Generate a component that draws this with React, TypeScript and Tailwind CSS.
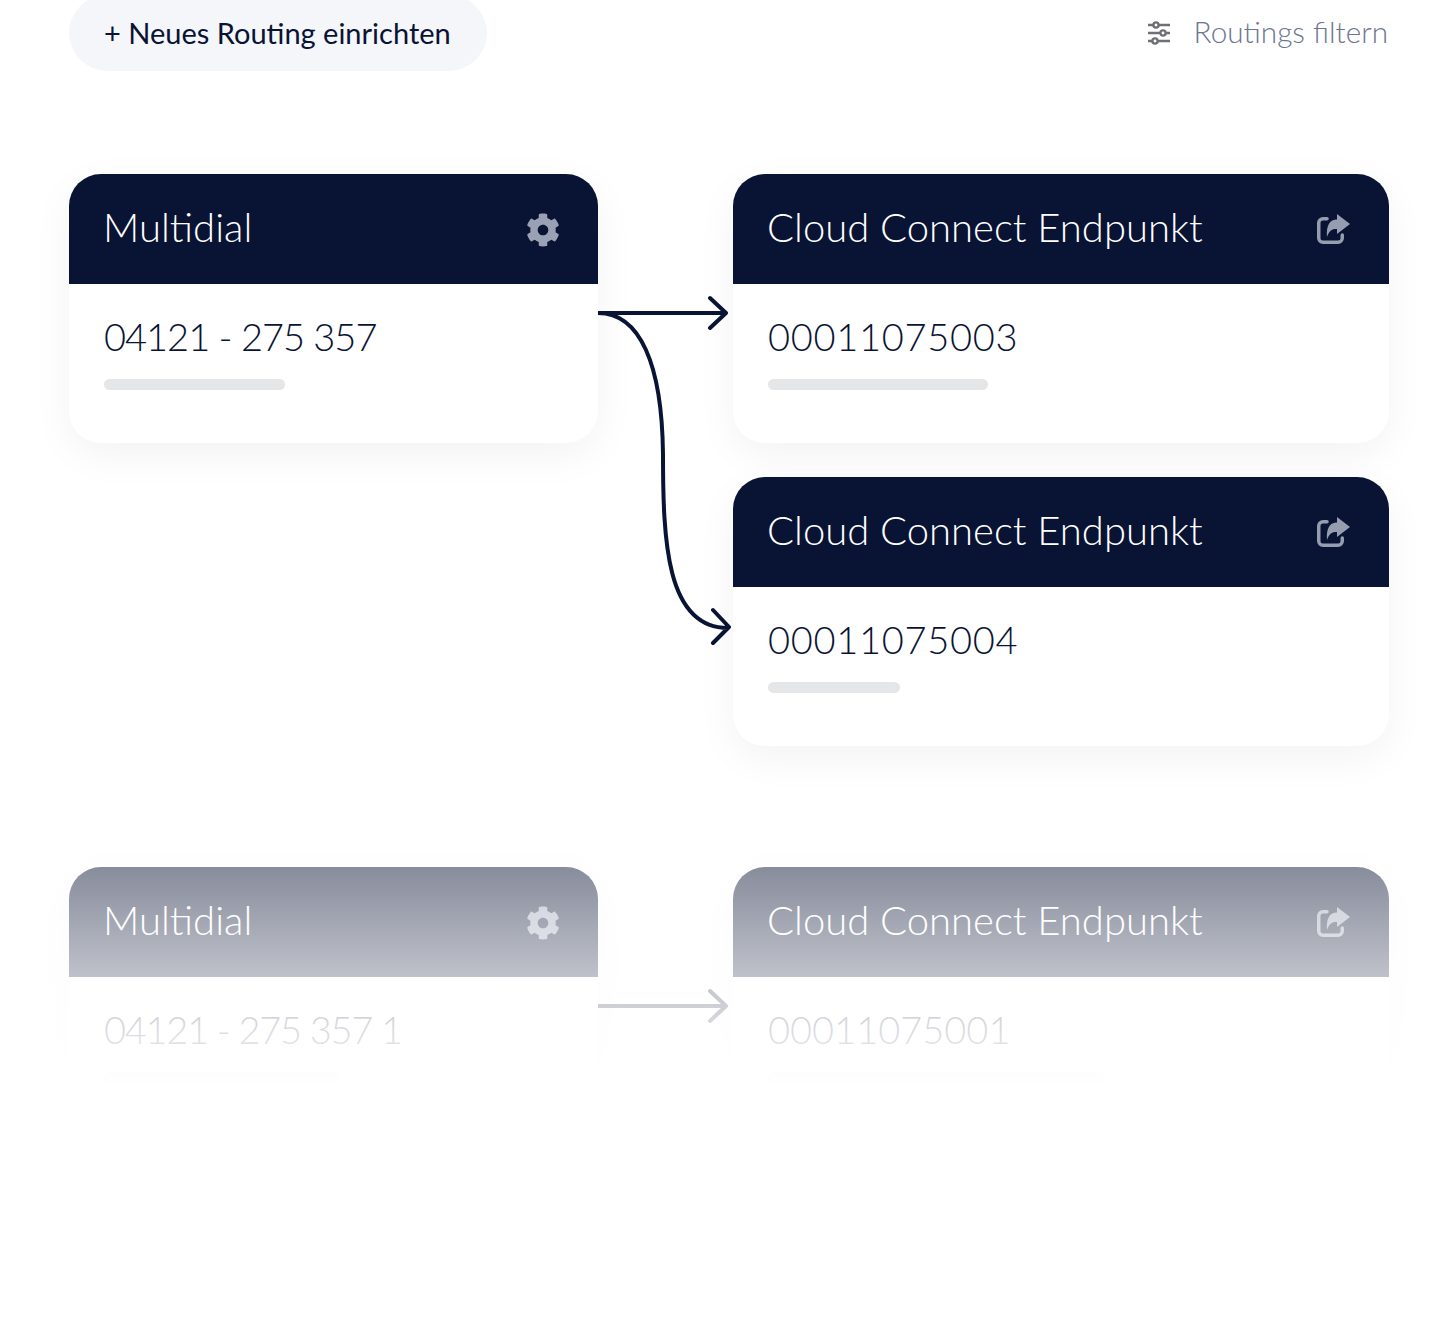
import { FaCog } from "react-icons/fa";

function Sliders() {
  return (
    <svg width="24" height="24" viewBox="0 0 24 24" fill="none" stroke="#6f7076" strokeWidth="2.4" className="shrink-0">
      <path d="M1 4h22M1 12h22M1 20h22" />
      <circle cx="9" cy="4" r="2.6" fill="#fff" />
      <circle cx="16" cy="12" r="2.6" fill="#fff" />
      <circle cx="8" cy="20" r="2.6" fill="#fff" />
    </svg>
  );
}

function ShareIcon() {
  return (
    <svg width="34" height="34" viewBox="0 0 34 34" className="shrink-0 mt-[3px]">
      <path d="M11 4.75H7a4.25 4.25 0 0 0-4.25 4.25V24a4.25 4.25 0 0 0 4.25 4.25H22a4.25 4.25 0 0 0 4.25-4.25V21" fill="none" stroke="#969daf" strokeWidth="3.5" strokeLinecap="round" />
      <path d="M34 10 21 0V5.5C14 5.5 10 11 11 23 13 17 16 14.5 21 15V20Z" fill="#969daf" strokeLinejoin="round" />
    </svg>
  );
}

function Card({ title, value, bar, share, tracking }: { title: string; value: string; bar: string; share?: boolean; tracking: string }) {
  return (
    <div className="h-[269px] rounded-[32px] bg-white shadow-[0_12px_40px_rgba(10,20,53,0.05)] overflow-hidden">
      <div className="h-[110px] bg-[#091333] pl-[35px] pr-[39px] flex items-center justify-between">
        <span className="text-[40px] font-light text-white leading-[46px] -mt-[5px] -ml-[1px]">{title}</span>
        {share ? <ShareIcon /> : <FaCog className="text-[#9aa1b4] text-[34px] -mr-[1px] mt-[2px]" />}
      </div>
      <div className="px-[35px] pt-[29px]">
        <div className={`text-[38px] font-light text-[#091333] leading-[46px] ${tracking}`}>{value}</div>
        <div className={`mt-[20px] h-[11px] rounded-full bg-[#e5e6e8] ${bar}`} />
      </div>
    </div>
  );
}

export default function App() {
  return (
    <div className="relative w-[1432px] h-[1328px] overflow-hidden bg-white pl-[69px] font-['Lato','Liberation_Sans',sans-serif]">
      <div className="w-[1319px] -mt-[5px] h-[76px] flex items-center justify-between">
        <div className="h-[76px] w-[418px] rounded-full bg-[#f4f6fa] pl-[35px] flex items-center text-[29px] text-[#091333]">
          <span className="-mt-[1px]">+ Neues Routing einrichten</span>
        </div>
        <div className="flex items-center gap-[23px] text-[29.7px] font-light text-[#6d7590]">
          <Sliders />
          <span className="-mt-[1px]">Routings filtern</span>
        </div>
      </div>

      <div className="mt-[103px] grid grid-cols-[529px_135px_656px]">
        <Card title="Multidial" value="04121 - 275 357" bar="w-[181px]" tracking="tracking-[-1px]" />
        <div className="relative">
          <svg width="140" height="480" viewBox="0 0 140 480" fill="none" stroke="#091333" strokeWidth="4" strokeLinecap="round" strokeLinejoin="round" className="absolute left-0 top-0">
            <path d="M0 139H127M112 124L128 139L112 154" />
            <path d="M0 139C42 139 64 190 65 280C65 366 68 454 130 454M115 436L131 453L115 469" />
          </svg>
        </div>
        <div className="flex flex-col gap-[34px]">
          <Card title="Cloud Connect Endpunkt" value="00011075003" bar="w-[220px]" share tracking="tracking-[0.7px]" />
          <Card title="Cloud Connect Endpunkt" value="00011075004" bar="w-[132px]" share tracking="tracking-[0.7px]" />
        </div>
      </div>

      <div className="mt-[122px] -translate-y-[1px] grid grid-cols-[529px_135px_656px]">
        <Card title="Multidial" value="04121 - 275 357 1" bar="w-[236px]" tracking="tracking-[-1.3px]" />
        <div className="relative">
          <svg width="135" height="180" viewBox="0 0 135 180" fill="none" stroke="#091333" strokeWidth="4" strokeLinecap="round" strokeLinejoin="round" className="absolute left-0 top-0">
            <path d="M0 139H127M112 124L128 139L112 154" />
          </svg>
        </div>
        <Card title="Cloud Connect Endpunkt" value="00011075001" bar="w-[337px]" share tracking="tracking-normal" />
      </div>

      <div className="absolute left-0 right-0 top-[860px] h-[468px] bg-gradient-to-b from-white/50 via-white via-[52%] to-white" />
    </div>
  );
}
